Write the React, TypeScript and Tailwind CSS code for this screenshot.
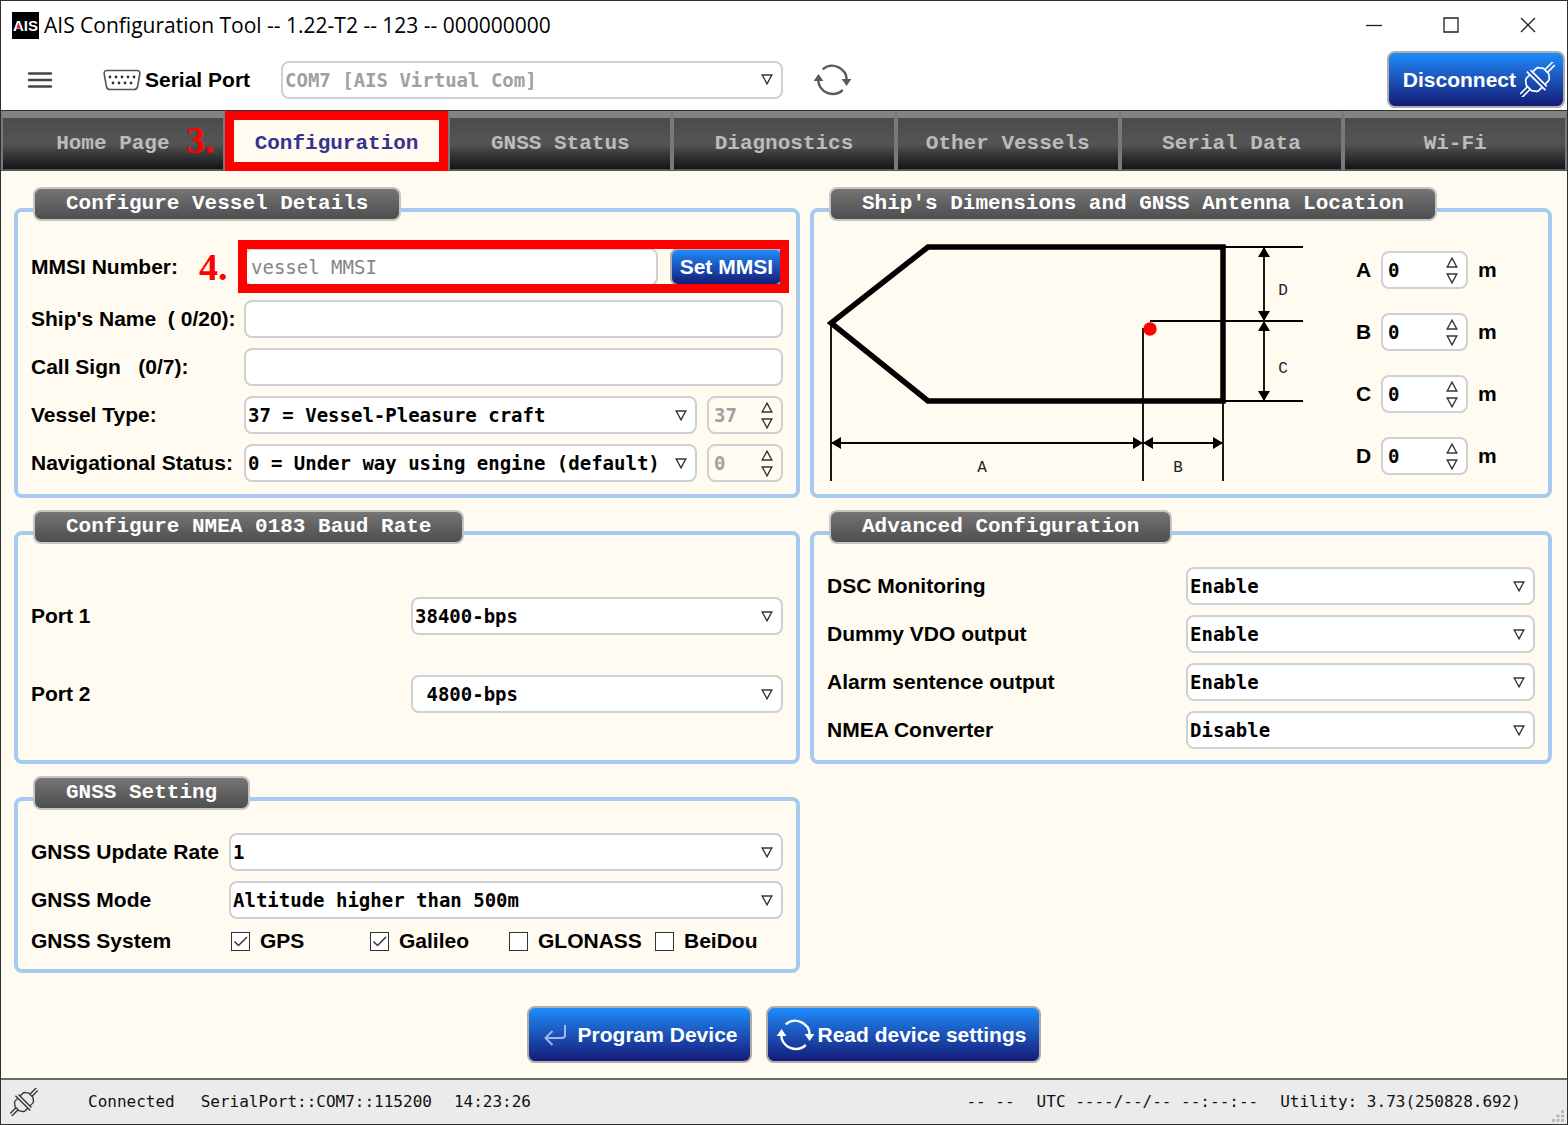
import React, { useState } from "react";

const labelText = "whitespace-pre font-['Liberation_Sans',sans-serif] text-[21px] font-bold leading-6 text-black";
const fieldText = "font-['DejaVu_Sans_Mono',monospace] text-[19px] leading-6";
const blueButton =
  "flex items-center rounded-lg border-2 border-[#b0aca8] bg-linear-to-b from-[#1e8cfc] to-[#151a78] font-['Liberation_Sans',sans-serif] text-[21px] font-bold leading-6 text-white";

function Logo() {
  return (
    <svg viewBox="0 0 27 27" className="h-[27px] w-[27px]" role="img" aria-label="AIS">
      <rect width="27" height="27" fill="#000" />
      <text x="13.5" y="19" textAnchor="middle" fontFamily="'Liberation Sans', sans-serif" fontSize="15" fontWeight="bold" fill="#fff">
        AIS
      </text>
      <path d="M6.500 11L8.600 16H4.400Z" fill="#e0263c" />
    </svg>
  );
}

function PlugIcon({ className }: { className: string }) {
  return (
    <svg viewBox="-52 -52 104 104" className={className} fill="none" stroke="currentColor" strokeWidth="5" aria-hidden="true">
      <g transform="rotate(-45)">
        <path d="M36 -5H71M36 6H67" />
        <path d="M-36 -6H-67M-36 5H-71" />
        <path d="M7 -26H20Q26 -26 29 -20L36 -11V11L29 20Q26 26 20 26H7" />
        <path d="M-7 -26H-20Q-26 -26 -29 -20L-36 -11V11L-29 20Q-26 26 -20 26H-7" />
        <path d="M5 -34V34M-6 -39V39" />
      </g>
    </svg>
  );
}

function RefreshIcon({ className }: { className: string }) {
  return (
    <svg viewBox="0 0 38 32" className={className} fill="none" stroke="currentColor" strokeWidth="2.4" aria-hidden="true">
      <path d="M9.700 5.300A14.600 14.600 0 0 1 33.800 16" />
      <path d="M29.700 26A14.600 14.600 0 0 1 5.200 16" />
      <path d="M28.600 15H38.400L33.600 22Z" fill="currentColor" stroke="none" />
      <path d="M.6 17H10.400L5.600 10Z" fill="currentColor" stroke="none" />
    </svg>
  );
}

function EnterIcon() {
  return (
    <svg viewBox="0 0 22 22" className="h-[22px] w-[22px] text-[#a3b8ea]" fill="none" stroke="currentColor" strokeWidth="2" aria-hidden="true">
      <path d="M21 1V11Q21 14 18 14H1.500M8.500 7L1.500 14L8.500 21" />
    </svg>
  );
}

function MenuIcon() {
  return (
    <svg viewBox="0 0 26 18" className="h-[18px] w-[26px]" fill="none" stroke="#444" strokeWidth="2.4" strokeLinecap="round" aria-hidden="true">
      <path d="M2 2.500H24M2 9H24M2 15.500H24" />
    </svg>
  );
}

function SerialIcon() {
  return (
    <svg viewBox="0 0 38 22" className="h-[22px] w-[38px]" aria-hidden="true">
      <path
        d="M4 1.500H34Q37.300 1.500 36.800 5L34.600 17.500Q34 20.500 31 20.500H7Q4 20.500 3.400 17.500L1.200 5Q.7 1.500 4 1.500Z"
        fill="none"
        stroke="#555"
        strokeWidth="1.6"
      />
      {[7, 13, 19, 25, 31].map((x) => (
        <circle key={x} cx={x} cy="8" r="1.4" fill="#333" />
      ))}
      {[10, 16, 22, 28].map((x) => (
        <circle key={x} cx={x} cy="14" r="1.4" fill="#333" />
      ))}
    </svg>
  );
}

function Triangle({ up = false }: { up?: boolean }) {
  return (
    <svg viewBox="0 0 12 11" className="h-[11px] w-3" fill="none" stroke="#3c3434" strokeWidth="1.4" aria-hidden="true">
      <path d={up ? "M6 1.200L10.800 10H1.200Z" : "M6 9.800L10.800 1H1.200Z"} />
    </svg>
  );
}

type SelectProps = { id: string; options: string[]; disabled?: boolean; className?: string };

function Select({ id, options, disabled, className = "flex-1" }: SelectProps) {
  return (
    <div className={`relative min-w-0 ${className}`}>
      <select
        id={id}
        disabled={disabled}
        className={`${fieldText} h-[38px] w-full appearance-none rounded-lg border-2 border-[#cdd1d4] bg-white pl-0.5 pr-8 font-bold whitespace-pre text-black opacity-100 disabled:text-[#a0a0a0]`}
      >
        {options.map((o) => (
          <option key={o}>{o}</option>
        ))}
      </select>
      <span className="pointer-events-none absolute inset-y-0 right-2.5 flex items-center">
        <Triangle />
      </span>
    </div>
  );
}

type SpinnerProps = { id: string; start: number; disabled?: boolean; className: string; label?: string };

function Spinner({ id, start, disabled, className, label }: SpinnerProps) {
  const [value, setValue] = useState(start);
  return (
    <div
      className={`flex h-[38px] items-center rounded-lg border-2 border-[#cdd1d4] pl-[5px] pr-2 ${disabled ? "" : "bg-white"} ${className}`}
    >
      <input
        id={id}
        aria-label={label}
        inputMode="numeric"
        disabled={disabled}
        value={value}
        onChange={(e) => setValue(Number(e.target.value) || 0)}
        className={`${fieldText} w-0 min-w-0 flex-1 bg-transparent font-bold text-black outline-none disabled:text-[#a0a0a0]`}
      />
      <div className="flex flex-col gap-[5px]">
        <button type="button" aria-label="Increase" disabled={disabled} onClick={() => setValue(value + 1)}>
          <Triangle up />
        </button>
        <button type="button" aria-label="Decrease" disabled={disabled} onClick={() => setValue(Math.max(0, value - 1))}>
          <Triangle />
        </button>
      </div>
    </div>
  );
}

function Group({ title, children }: { title: string; children: React.ReactNode }) {
  return (
    <section className="flex flex-col rounded-lg border-4 border-[#a6caf0] px-[13px]">
      <h2 className="-mt-[25px] ml-0.5 flex h-[34px] items-center self-start rounded-lg border-2 border-[#c4c6c6] bg-linear-to-b from-[#757575] to-[#4e4e4e] px-[31px] font-['Liberation_Mono',monospace] text-[21px] font-bold leading-6 text-white whitespace-nowrap">
        {title}
      </h2>
      {children}
    </section>
  );
}

function Row({ id, label, labelClass, children }: { id: string; label: string; labelClass: string; children: React.ReactNode }) {
  return (
    <div className="flex items-center">
      <label htmlFor={id} className={`${labelText} shrink-0 ${labelClass}`}>
        {label}
      </label>
      {children}
    </div>
  );
}

function ShipDiagram() {
  return (
    <svg viewBox="0 0 477 242" className="h-[242px] w-[477px] shrink-0" role="img" aria-label="Ship dimensions">
      <path d="M101 7H396V161H101L4 83Z" fill="none" stroke="#000" strokeWidth="5.5" />
      <path
        d="M4 83V241M316 88V241M396 161V241M396 7H476M323 81H476M396 161H476M437 7V161M4 203H396"
        fill="none"
        stroke="#000"
        strokeWidth="1.8"
      />
      <path
        d="M4 203L14 197V209ZM316 203L306 197V209ZM316 203L326 197V209ZM396 203L386 197V209ZM437 7L431 17H443ZM437 81L431 71H443ZM437 81L431 91H443ZM437 161L431 151H443Z"
        fill="#000"
      />
      <circle cx="323" cy="89" r="6.7" fill="#f00" />
      <g fontFamily="'Liberation Mono', monospace" fontSize="16" textAnchor="middle" fill="#222">
        <text x="155" y="232">A</text>
        <text x="351" y="232">B</text>
        <text x="456" y="133">C</text>
        <text x="456" y="55">D</text>
      </g>
    </svg>
  );
}

const tabs = ["Home Page", "Configuration", "GNSS Status", "Diagnostics", "Other Vessels", "Serial Data", "Wi-Fi"];
const systems = [
  { name: "GPS", on: true },
  { name: "Galileo", on: true },
  { name: "GLONASS", on: false },
  { name: "BeiDou", on: false },
];
const advanced = [
  { id: "dsc", label: "DSC Monitoring", options: ["Enable", "Disable"] },
  { id: "vdo", label: "Dummy VDO output", options: ["Enable", "Disable"] },
  { id: "alarm", label: "Alarm sentence output", options: ["Enable", "Disable"] },
  { id: "conv", label: "NMEA Converter", options: ["Disable", "Enable"] },
];
const textInput = `${fieldText} h-[38px] min-w-0 flex-1 rounded-lg border-2 border-[#cdd1d4] bg-white px-[5px] outline-none placeholder:text-[#858585]`;
const callout = "font-['Liberation_Serif',serif] text-[38px] font-bold leading-10 text-[#f00]";

export default function App() {
  return (
    <div className="flex min-h-screen flex-col border border-[#2f2f2f] bg-[#fffbf0]">
      <header className="bg-white">
        <div className="flex h-12 items-center pl-[11px] pr-[31px]">
          <Logo />
          <h1 className="ml-[5px] flex-1 font-['Open_Sans',sans-serif] text-[21px] leading-7 text-black">
            AIS Configuration Tool -- 1.22-T2 -- 123 -- 000000000
          </h1>
          <div className="flex items-center gap-[61px] text-[#222]">
            {[
              ["Minimize", "M0 8.500H16"],
              ["Maximize", "M1 1H15V15H1Z"],
              ["Close", "M1 1L15 15M15 1L1 15"],
            ].map(([name, d]) => (
              <button key={name} type="button" aria-label={name}>
                <svg viewBox="0 0 16 16" className="h-4 w-4" fill="none" stroke="currentColor" strokeWidth="1.3">
                  <path d={d} />
                </svg>
              </button>
            ))}
          </div>
        </div>
        <div className="flex h-[61px] items-center pl-[26px] pr-0.5">
          <button type="button" aria-label="Menu">
            <MenuIcon />
          </button>
          <label htmlFor="com" className={`${labelText} ml-[50px] flex w-[178px] items-center gap-1`}>
            <SerialIcon />
            Serial Port
          </label>
          <Select id="com" options={["COM7 [AIS Virtual Com]"]} disabled className="w-[502px]" />
          <button type="button" aria-label="Refresh ports" className="ml-[30px]">
            <RefreshIcon className="h-8 w-[38px] text-[#5a5a5a]" />
          </button>
          <button type="button" className={`${blueButton} ml-auto h-[57px] gap-1 pl-[14px] pr-2`}>
            Disconnect
            <PlugIcon className="h-[35px] w-[35px]" />
          </button>
        </div>
      </header>

      <nav className="relative grid grid-cols-7 border-t border-t-[#333]">
        {tabs.map((tab) =>
          tab === "Configuration" ? (
            <button
              key={tab}
              type="button"
              className="h-[60px] border-[9px] border-[#f00] bg-[#fffbf0] pt-1.5 font-['Liberation_Mono',monospace] text-[21px] font-bold leading-6 whitespace-nowrap text-[#37328f]"
            >
              {tab}
            </button>
          ) : (
            <button
              key={tab}
              type="button"
              className="h-[60px] border-x-2 border-t-[7px] border-b-2 border-x-[#747a7d] border-t-[#828482] border-b-[#55585c] bg-linear-to-b from-[#4b4b4b] via-[#555] to-[#151515] font-['Liberation_Mono',monospace] text-[21px] font-bold leading-6 whitespace-nowrap text-[#bcbcbc]"
            >
              {tab}
            </button>
          ),
        )}
        <span className={`${callout} absolute top-[9px] left-[185px]`}>3.</span>
      </nav>

      <main className="flex flex-1 flex-col pt-[37px] pr-[15px] pb-[15px] pl-[13px]">
        <div className="grid grid-cols-[786fr_742fr] gap-x-2.5 gap-y-[33px]">
          <Group title="Configure Vessel Details">
            <div className="mt-[27px] mb-3 flex flex-col gap-2.5">
              <div className="mb-1">
                <Row id="mmsi" label="MMSI Number:" labelClass="w-[168px]">
                  <span className={`${callout} -my-2 w-[45px]`}>4.</span>
                  <div className="relative flex min-w-0 flex-1 gap-3">
                    <input id="mmsi" placeholder="vessel MMSI" className={textInput} />
                    <button type="button" className={`${blueButton} h-[38px] px-2 whitespace-nowrap`}>
                      Set MMSI
                    </button>
                    <span className="pointer-events-none absolute -inset-x-1.5 -top-2 -bottom-[7px] border-[9px] border-[#f00]" />
                  </div>
                </Row>
              </div>
              <Row id="name" label="Ship's Name  ( 0/20):" labelClass="w-[213px]">
                <input id="name" className={textInput} />
              </Row>
              <Row id="call" label="Call Sign   (0/7):" labelClass="w-[213px]">
                <input id="call" className={textInput} />
              </Row>
              <Row id="type" label="Vessel Type:" labelClass="w-[213px]">
                <Select id="type" options={["37 = Vessel-Pleasure craft"]} />
                <Spinner id="type-code" label="Vessel type code" start={37} disabled className="ml-2.5 w-[76px]" />
              </Row>
              <Row id="status" label="Navigational Status:" labelClass="w-[213px]">
                <Select id="status" options={["0 = Under way using engine (default)"]} />
                <Spinner id="status-code" label="Navigational status code" start={0} disabled className="ml-2.5 w-[76px]" />
              </Row>
            </div>
          </Group>

          <Group title="Ship's Dimensions and GNSS Antenna Location">
            <div className="mt-[19px] flex items-start">
              <ShipDiagram />
              <div className="mt-[11px] ml-[52px] flex flex-col gap-6">
                {["A", "B", "C", "D"].map((d) => (
                  <div key={d} className="flex items-center">
                    <label htmlFor={`dim-${d}`} className={`${labelText} w-[25px]`}>
                      {d}
                    </label>
                    <Spinner id={`dim-${d}`} start={0} className="w-[87px]" />
                    <span className={`${labelText} ml-2.5`}>m</span>
                  </div>
                ))}
              </div>
            </div>
          </Group>

          <Group title="Configure NMEA 0183 Baud Rate">
            <div className="mt-[53px] mb-[47px] flex flex-col gap-10">
              <Row id="port1" label="Port 1" labelClass="w-[380px]">
                <Select id="port1" options={["38400-bps"]} />
              </Row>
              <Row id="port2" label="Port 2" labelClass="w-[380px]">
                <Select id="port2" options={["\u00a04800-bps"]} />
              </Row>
            </div>
          </Group>

          <Group title="Advanced Configuration">
            <div className="mt-[23px] flex flex-col gap-2.5">
              {advanced.map((a) => (
                <Row key={a.id} id={a.id} label={a.label} labelClass="w-[359px]">
                  <Select id={a.id} options={a.options} />
                </Row>
              ))}
            </div>
          </Group>

          <Group title="GNSS Setting">
            <div className="mt-[23px] mb-4 flex flex-col gap-2.5">
              <Row id="rate" label="GNSS Update Rate" labelClass="w-[198px]">
                <Select id="rate" options={["1"]} />
              </Row>
              <Row id="mode" label="GNSS Mode" labelClass="w-[198px]">
                <Select id="mode" options={["Altitude higher than 500m"]} />
              </Row>
              <div className="flex items-center" role="group" aria-labelledby="gnss-system">
                <span id="gnss-system" className={`${labelText} w-[200px] shrink-0`}>
                  GNSS System
                </span>
                <div className="grid flex-1 grid-cols-[139px_139px_146px_auto]">
                  {systems.map((s) => (
                    <label key={s.name} className={`${labelText} flex items-center gap-2.5`}>
                      <span className="grid">
                        <input
                          type="checkbox"
                          defaultChecked={s.on}
                          className="peer col-start-1 row-start-1 h-[19px] w-[19px] appearance-none border border-[#333] bg-white"
                        />
                        <svg
                          viewBox="0 0 19 19"
                          className="pointer-events-none invisible col-start-1 row-start-1 h-[19px] w-[19px] peer-checked:visible"
                          fill="none"
                          stroke="#333"
                          strokeWidth="1.5"
                        >
                          <path d="M3.500 9.500L7.500 13.500L16 5" />
                        </svg>
                      </span>
                      {s.name}
                    </label>
                  ))}
                </div>
              </div>
            </div>
          </Group>
        </div>

        <div className="mt-[33px] flex justify-center gap-3.5 pl-0.5">
          <button type="button" className={`${blueButton} h-[57px] gap-3 pl-[15px] pr-3`}>
            <EnterIcon />
            Program Device
          </button>
          <button type="button" className={`${blueButton} h-[57px] gap-1 pl-2 pr-[13px]`}>
            <RefreshIcon className="h-8 w-[38px]" />
            Read device settings
          </button>
        </div>
      </main>

      <footer className="flex h-[46px] items-center border-t-2 border-[#6a6a6a] bg-[#ebebeb] pl-[9px] font-['DejaVu_Sans_Mono',monospace] text-[16px] leading-5 text-[#111]">
        <PlugIcon className="h-7 w-7 text-[#333]" />
        <span className="ml-[50px]">Connected</span>
        <span className="ml-[26px]">SerialPort::COM7::115200</span>
        <span className="ml-[22px]">14:23:26</span>
        <span className="ml-auto">-- --</span>
        <span className="ml-[22px]">UTC ----/--/-- --:--:--</span>
        <span className="ml-[22px]">Utility: 3.73(250828.692)</span>
        <svg viewBox="0 0 12 12" className="mr-[3px] mb-0.5 ml-[31px] h-3 w-3 self-end" fill="#bbb" aria-hidden="true">
          <path d="M9 0h3v3H9zM9 4.500h3v3H9zM4.500 4.500h3v3h-3zM9 9h3v3H9zM4.500 9h3v3h-3zM0 9h3v3H0z" />
        </svg>
      </footer>
    </div>
  );
}
